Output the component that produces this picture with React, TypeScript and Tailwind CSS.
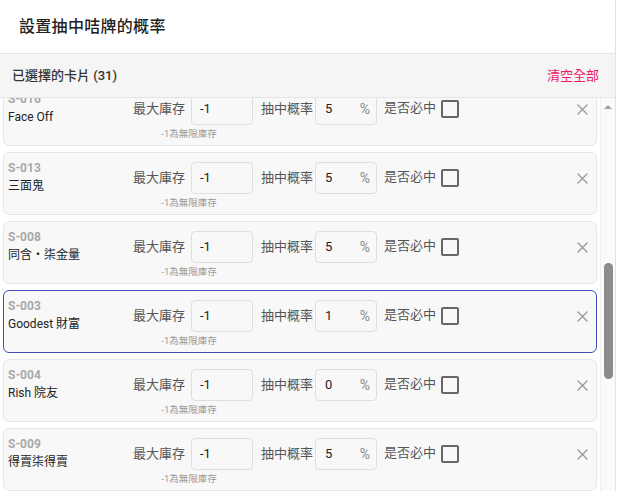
import React from 'react';

type Card = { code: string; name: string; stock: string; rate: string; selected?: boolean };

const CARDS: Card[] = [
  { code: 'S-016', name: 'Face Off', stock: '-1', rate: '5' },
  { code: 'S-013', name: '三面鬼', stock: '-1', rate: '5' },
  { code: 'S-008', name: '同含・柒金量', stock: '-1', rate: '5' },
  { code: 'S-003', name: 'Goodest 財富', stock: '-1', rate: '1', selected: true },
  { code: 'S-004', name: 'Rish 院友', stock: '-1', rate: '0' },
  { code: 'S-009', name: '得賣柒得賣', stock: '-1', rate: '5' },
  { code: 'S-011', name: '阿寶', stock: '-1', rate: '5' },
];

const FONT = { fontFamily: 'Roboto, "Noto Sans CJK TC", "Noto Sans", sans-serif' };

function CloseIcon() {
  return (
    <svg width="11" height="11" viewBox="0 0 11 11" fill="none" stroke="#9a9a9a" strokeWidth="1.4" strokeLinecap="round">
      <path d="M1 1L10 10M10 1L1 10" />
    </svg>
  );
}

function CardRow({ card }: { card: Card }) {
  return (
    <div
      className={`h-[63px] shrink-0 rounded-[6px] border bg-[#f8f8f8] pl-[4px] pr-[8px] flex items-start ${
        card.selected ? 'border-[#3f51b5]' : 'border-[#e6e6e6]'
      }`}
    >
      <div className="w-[125px] pt-[7px] flex flex-col">
        <span className="text-[12px] leading-[17px] font-bold text-[#a8a8a8]">{card.code}</span>
        <span className="text-[12px] leading-[18px] text-[#222]">{card.name}</span>
      </div>
      <div className="flex flex-col items-center pt-[9px]">
        <div className="flex items-center gap-[6px]">
          <span className="text-[13px] text-[#555]">最大庫存</span>
          <div className="w-[62px] h-[32px] rounded-[4px] border border-[#dedede] bg-[#f8f8f8] flex items-center px-[8px] text-[13px] text-[#222]">
            {card.stock}
          </div>
        </div>
        <span className="mt-[3px] text-[9.5px] leading-[12px] text-[#9a9a9a] pr-[8px]">-1為無限庫存</span>
      </div>
      <div className="flex items-center gap-[2px] pt-[9px] ml-[8px]">
        <span className="text-[13px] text-[#555]">抽中概率</span>
        <div className="w-[62px] h-[32px] rounded-[4px] border border-[#dedede] bg-[#f8f8f8] flex items-center justify-between pl-[9px] pr-[6px] text-[13px]">
          <span className="text-[#222]">{card.rate}</span>
          <span className="text-[#8a8a8a] text-[14px]">%</span>
        </div>
      </div>
      <div className="flex items-center gap-[5px] pt-[9px] ml-[7px] h-[41px]">
        <span className="text-[13px] text-[#555] -mt-[2px]">是否必中</span>
        <span className="w-[18px] h-[18px] border-2 border-[#666] rounded-[2px]" />
      </div>
      <div className="flex-1 flex justify-end pt-[20px]">
        <CloseIcon />
      </div>
    </div>
  );
}

export default function App() {
  return (
    <div className="w-[622px] h-[491px] bg-white overflow-hidden" style={FONT}>
      <div className="w-[616px] h-full flex flex-col border-r border-[#e2e2e2]">
        <div className="h-[54px] shrink-0 flex items-center pl-[19px] border-b border-[#e6e6e6]">
          <h1 className="text-[16px] font-medium text-[#222] tracking-[0.3px]">設置抽中咭牌的概率</h1>
        </div>
        <div className="h-[44px] shrink-0 bg-[#f5f5f5] border-b border-[#e6e6e6] flex items-center justify-between pl-[12px] pr-[16px]">
          <span className="text-[13px] font-medium text-[#333]">已選擇的卡片 (31)</span>
          <button type="button" className="text-[13px] text-[#ec1a6a]">清空全部</button>
        </div>
        <div className="flex-1 flex min-h-0">
          <div className="flex-1 overflow-hidden pl-[3px] pr-[3px]">
            <div className="flex flex-col gap-[6px] -mt-[15px]">
              {CARDS.map((c) => (
                <CardRow key={c.code} card={c} />
              ))}
            </div>
          </div>
          <div className="w-[15px] shrink-0 bg-[#fafafa] border-l border-[#efefef] flex flex-col items-center">
            <div className="mt-[7px] w-0 h-0 border-l-[4px] border-r-[4px] border-b-[4px] border-l-transparent border-r-transparent border-b-[#a3a3a3]" />
            <div className="mt-[154px] w-[9px] h-[116px] rounded-full bg-[#8c8c8c]" />
          </div>
        </div>
      </div>
    </div>
  );
}
